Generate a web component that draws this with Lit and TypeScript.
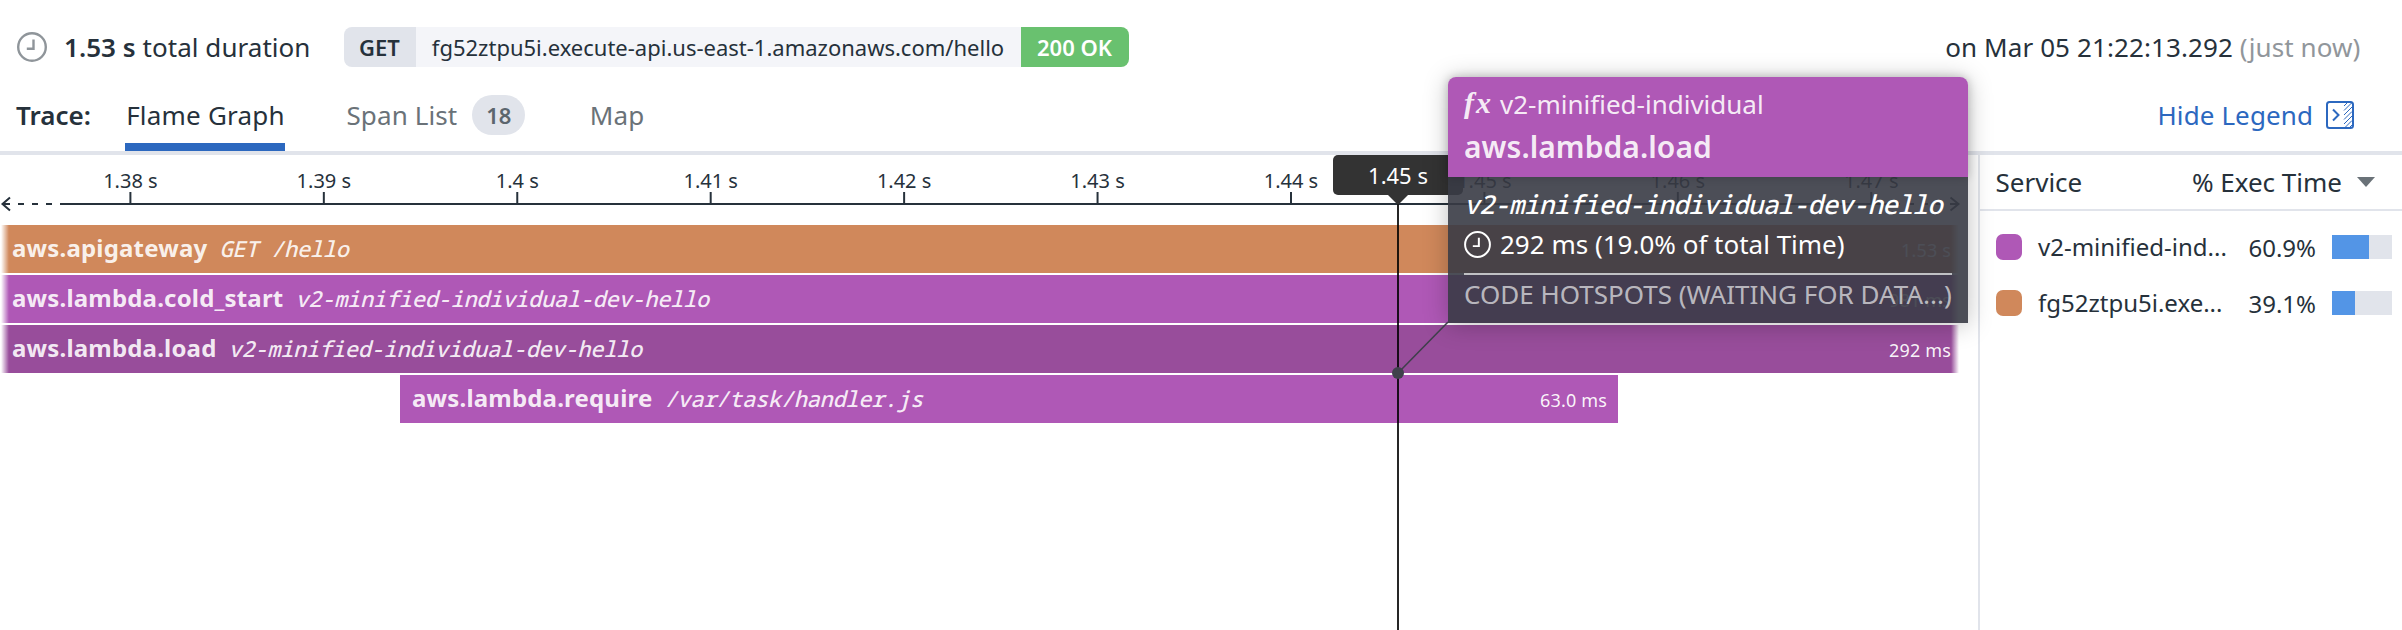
import { LitElement, html, svg, css } from 'lit';
import { customElement } from 'lit/decorators.js';
import { styleMap } from 'lit/directives/style-map.js';
import { classMap } from 'lit/directives/class-map.js';

interface Span {
  name: string;
  resource: string;
  duration: string;
  tone: 'orange' | 'purple' | 'active';
  left: number;
  width: number;
  clipped: boolean;
}

const AXIS_START = 130.4;
const AXIS_STEP = 193.43;
const TICKS = ['1.38 s', '1.39 s', '1.4 s', '1.41 s', '1.42 s', '1.43 s', '1.44 s', '1.45 s', '1.46 s', '1.47 s'];

const SPANS: Span[] = [
  { name: 'aws.apigateway', resource: 'GET /hello', duration: '1.53 s', tone: 'orange', left: 0, width: 1960, clipped: true },
  { name: 'aws.lambda.cold_start', resource: 'v2-minified-individual-dev-hello', duration: '981 ms', tone: 'purple', left: 0, width: 1960, clipped: true },
  { name: 'aws.lambda.load', resource: 'v2-minified-individual-dev-hello', duration: '292 ms', tone: 'active', left: 0, width: 1960, clipped: true },
  { name: 'aws.lambda.require', resource: '/var/task/handler.js', duration: '63.0 ms', tone: 'purple', left: 400, width: 1218, clipped: false },
];

const SERVICES = [
  { name: 'v2-minified-ind...', tone: 'purple', share: 60.9 },
  { name: 'fg52ztpu5i.exe...', tone: 'orange', share: 39.1 },
];

const clock = (size: number, stroke: number) => html`
  <svg class="icon" width=${size} height=${size} viewBox="0 0 30 30" fill="none" stroke="currentColor" stroke-width=${stroke}>
    <circle cx="15" cy="15" r="13.8" />
    <path d="M16.5 7.5V16.8H9.8" />
  </svg>`;

@customElement('trace-header')
export class TraceHeader extends LitElement {
  static styles = css`
    :host { display: block; }
    .summary { height: 94px; display: flex; align-items: center; padding: 0 41.5px 0 17px; box-sizing: border-box; }
    .icon { display: block; color: #8f959a; }
    .total { margin-left: 17px; white-space: pre; letter-spacing: 0.05px; }
    b { font-weight: 600; }
    .request { display: flex; margin-left: 33px; height: 40px; line-height: 40px; font-size: 22px; border-radius: 8px; overflow: hidden; }
    .method { width: 72px; text-align: center; font-weight: 600; background: #e1e4eb; }
    .url { width: 605px; text-align: center; background: #f4f5f9; }
    .status { width: 108px; text-align: center; font-weight: 600; color: #fff; background: #69c16f; }
    .when { margin-left: auto; letter-spacing: 0.1px; }
    .muted { color: #91969b; }
    .bar { display: flex; height: 57px; border-bottom: 4px solid #e1e4eb; padding: 0 48px 0 16px; }
    .bar > * { height: 42px; line-height: 42px; }
    .label { font-weight: 600; width: 109px; }
    .tab { color: #6a7278; letter-spacing: 0.1px; }
    .bar > .on { color: #26313b; letter-spacing: 0.22px; box-sizing: border-box; width: 160px; height: 57px; padding-left: 1px; text-align: center; border-bottom: 8px solid #2c68bf; margin-right: 61.5px; }
    .bar > .count { margin: 1px 64.5px 0 15px; height: 40px; line-height: 40px; width: 53px; border-radius: 20px; background: #e1e4eb; color: #5c666e; font-size: 22px; font-weight: 600; text-align: center; }
    .hide { margin-left: auto; display: flex; align-items: center; gap: 13px; color: #2c68bf; letter-spacing: 0.1px; }
  `;

  render() {
    return html`
      <div class="summary">
        ${clock(30, 2.4)}
        <div class="total"><b>1.53 s</b> total duration</div>
        <div class="request">
          <span class="method">GET</span>
          <span class="url">fg52ztpu5i.execute-api.us-east-1.amazonaws.com/hello</span>
          <span class="status">200 OK</span>
        </div>
        <div class="when">on Mar 05 21:22:13.292 <span class="muted">(just now)</span></div>
      </div>
      <div class="bar">
        <div class="label">Trace:</div>
        <div class="tab on">Flame Graph</div>
        <div class="tab">Span List</div>
        <div class="count">18</div>
        <div class="tab">Map</div>
        <div class="hide">
          <span>Hide Legend</span>
          <svg width="28" height="28" viewBox="0 0 28 28" fill="none" stroke="currentColor">
            <rect x="1" y="1" width="26" height="26" rx="2.5" stroke-width="2" />
            <path d="M7 8.5L12.5 14L7 19.5" stroke-width="2" />
            <path d="M18 5L21 2M18 9.5L25.5 2M18 14L26 6M18 18.500L26 10.500M18 23L26 15M19.500 26L26 19.500M24 26L26 24" stroke-width="1" />
          </svg>
        </div>
      </div>
    `;
  }
}

@customElement('flame-graph')
export class FlameGraph extends LitElement {
  static styles = css`
    :host { display: block; position: relative; width: 1978px; height: 475px; }
    .axis { display: block; }
    .axis text { font-size: 20px; fill: #26313b; text-anchor: middle; }
    .rows { display: flex; flex-direction: column; gap: 2px; padding-top: 2px; }
    .span { position: relative; height: 48px; line-height: 45px; padding: 0 11px 0 12px; box-sizing: border-box; display: flex; align-items: baseline; color: rgba(255, 255, 255, 0.9); }
    .clipped { padding-right: 9px; }
    .clipped::before, .clipped::after { content: ''; position: absolute; top: 0; bottom: 0; width: 9px; }
    .clipped::before { left: 0; background: linear-gradient(to right, #fff 1px, rgba(255, 255, 255, 0)); }
    .clipped::after { right: 0; background: linear-gradient(to left, #fff 1px, rgba(255, 255, 255, 0)); }
    .orange { background: #d0885b; }
    .purple { background: #af58b6; }
    .active { background: #984d9b; }
    .name { font-size: 24px; font-weight: 700; letter-spacing: 0.18px; }
    .resource { margin-left: 12px; font: italic 500 22px/45px "Noto Sans Mono", "Liberation Mono", monospace; letter-spacing: -0.28px; white-space: pre; }
    .time { margin-left: auto; font-size: 18px; letter-spacing: 0.15px; color: rgba(255, 255, 255, 0.95); }
    .cursor { position: absolute; left: 1333px; top: 0; width: 130px; height: 475px; display: flex; flex-direction: column; align-items: center; }
    .flag { width: 130px; height: 40px; line-height: 40px; border-radius: 5px; background: #333; color: #fff; font-size: 22px; text-align: center; }
    .point { width: 20px; height: 10px; background: #333; clip-path: polygon(0 0, 100% 0, 50% 100%); }
    .line { width: 2px; flex: 1; margin-top: -2px; background: rgba(0, 0, 0, 0.85); }
    .leader { position: absolute; left: 1390px; top: 165px; }
    .tip { position: absolute; left: 1448px; top: -78px; width: 520px; height: 246px; border-radius: 8px 8px 0 0; box-shadow: 0 2px 24px rgba(0, 0, 0, 0.25); color: #fff; box-sizing: border-box; }
    .head { height: 100px; box-sizing: border-box; padding: 7px 16px; border-radius: 8px 8px 0 0; background: #af58b6; color: rgba(255, 255, 255, 0.9); position: relative; box-shadow: 0 0 10px rgba(0, 0, 0, 0.2); }
    .body { height: 146px; box-sizing: border-box; padding: 5px 16px 0; background: rgba(56, 59, 69, 0.9); }
    .service { height: 40px; line-height: 40px; display: flex; }
    .fx { width: 36px; font: italic bold 30px/38px "Liberation Serif", serif; letter-spacing: 2px; }
    .op { font-size: 30px; line-height: 45px; font-weight: 600; letter-spacing: 0.05px; }
    .fn { font: italic 500 26px/44px "Noto Sans Mono", "Liberation Mono", monospace; letter-spacing: -0.66px; white-space: nowrap; height: 42px; }
    .dur { height: 40px; line-height: 40px; display: flex; align-items: center; gap: 9px; }
    .hot { margin-top: 9px; border-top: 2px solid rgba(255, 255, 255, 0.65); line-height: 39px; color: rgba(255, 255, 255, 0.65); white-space: nowrap; }
  `;

  render() {
    return html`
      <svg class="axis" width="1978" height="68" viewBox="0 0 1978 68" fill="none" stroke="#26313b" stroke-width="2">
        <path d="M60 49H1900" />
        <path d="M18 49h6M32 49h6M46 49h6M1908 49h6M1922 49h6M1936 49h6" />
        <path d="M2 49h8M10 42.500L2.500 49L10 55.500M1958 49h-8M1950.500 42.500L1958.500 49L1950.500 55.500" />
        ${TICKS.map((label, i) => {
          const x = AXIS_START + AXIS_STEP * i;
          return svg`<path d="M${x} 37V49" stroke-width="2" /><text x=${x} y="33" stroke="none">${label}</text>`;
        })}
      </svg>
      <div class="rows">
        ${SPANS.map((s) => html`
          <div class=${classMap({ span: true, [s.tone]: true, clipped: s.clipped })}
            style=${styleMap({ marginLeft: `${s.left}px`, width: `${s.width}px` })}>
            <span class="name">${s.name}</span>
            <span class="resource">${s.resource}</span>
            <span class="time">${s.duration}</span>
          </div>`)}
      </div>
      <div class="cursor">
        <div class="flag">1.45 s</div>
        <div class="point"></div>
        <div class="line"></div>
      </div>
      <div class="tip">
        <div class="head">
          <div class="service"><span class="fx">fx</span><span>v2-minified-individual</span></div>
          <div class="op">aws.lambda.load</div>
        </div>
        <div class="body">
          <div class="fn">v2-minified-individual-dev-hello</div>
          <div class="dur">${clock(27, 2.2)}<span>292 ms (19.0% of total Time)</span></div>
          <div class="hot">CODE HOTSPOTS (WAITING FOR DATA...)</div>
        </div>
      </div>
      <svg class="leader" width="60" height="62" viewBox="0 0 60 62">
        <path d="M8 53L58 2" stroke="#3f3f4b" stroke-width="1.600" />
        <circle cx="8" cy="53" r="6" fill="#3f414c" />
      </svg>
    `;
  }
}

@customElement('service-legend')
export class ServiceLegend extends LitElement {
  static styles = css`
    :host { display: block; flex: 1; border-left: 2px solid #e1e4eb; }
    .head { display: flex; align-items: center; height: 54px; padding: 0 27px 0 15.5px; border-bottom: 2px solid #e1e4eb; }
    .metric { margin-left: auto; }
    .arrow { margin-left: 15px; width: 18px; height: 10px; background: #6a7278; clip-path: polygon(0 0, 100% 0, 50% 100%); }
    .list { padding-top: 8px; font-size: 24px; }
    .row { height: 56px; display: flex; align-items: center; padding: 0 10px 0 16px; }
    .swatch { width: 26px; height: 26px; border-radius: 7px; margin-right: 16px; }
    .orange { background: #d0885b; }
    .purple { background: #af58b6; }
    .label { margin-top: -1px; }
    .share { margin-left: auto; }
    .meter { margin-left: 16px; width: 60px; height: 24px; background: #e1e4eb; }
    .fill { height: 24px; background: #5395e6; }
  `;

  render() {
    return html`
      <div class="head"><span>Service</span><span class="metric">% Exec Time</span><span class="arrow"></span></div>
      <div class="list">
        ${SERVICES.map((s) => html`
          <div class="row">
            <span class="swatch ${s.tone}"></span>
            <span class="label">${s.name}</span>
            <span class="share">${s.share.toFixed(1)}%</span>
            <div class="meter"><div class="fill" style=${styleMap({ width: `${s.share}%` })}></div></div>
          </div>`)}
      </div>
    `;
  }
}

@customElement('app-root')
export class AppRoot extends LitElement {
  static styles = css`
    :host { display: block; width: 100%; height: 630px; overflow: hidden; background: #fff; color: #26313b; font: 26px "Noto Sans", sans-serif; }
    .main { display: flex; height: 475px; }
  `;

  render() {
    return html`
      <trace-header></trace-header>
      <div class="main">
        <flame-graph></flame-graph>
        <service-legend></service-legend>
      </div>
    `;
  }
}
